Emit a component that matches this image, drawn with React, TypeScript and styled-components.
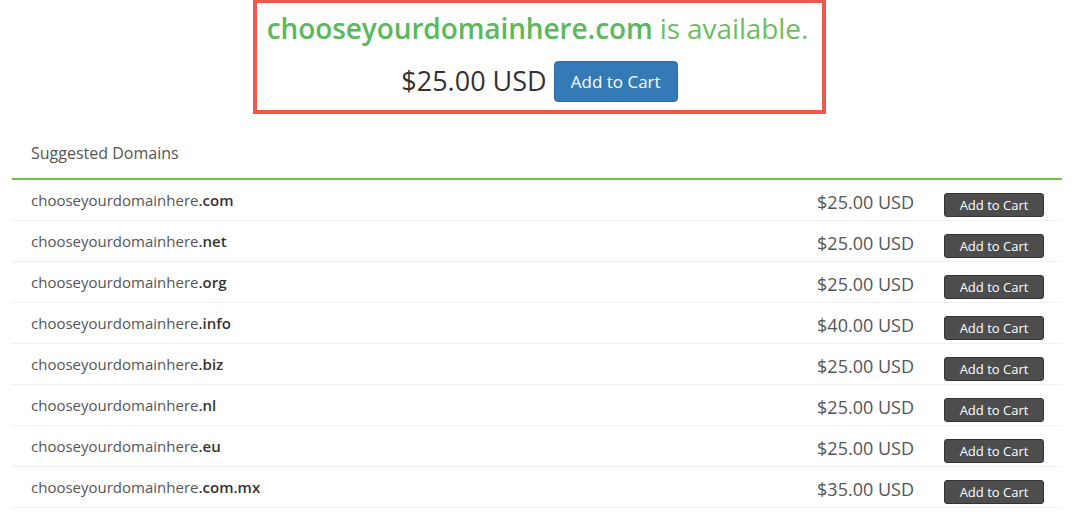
import styled, { createGlobalStyle } from 'styled-components';

const GlobalStyle = createGlobalStyle`
  html, body {
    margin: 0;
    padding: 0;
    background: #ffffff;
    font-family: 'Open Sans', 'Liberation Sans', sans-serif;
  }
`;

type Suggestion = {
  name: string;
  tld: string;
  price: string;
};

const suggestions: Suggestion[] = [
  { name: 'chooseyourdomainhere', tld: '.com', price: '$25.00 USD' },
  { name: 'chooseyourdomainhere', tld: '.net', price: '$25.00 USD' },
  { name: 'chooseyourdomainhere', tld: '.org', price: '$25.00 USD' },
  { name: 'chooseyourdomainhere', tld: '.info', price: '$40.00 USD' },
  { name: 'chooseyourdomainhere', tld: '.biz', price: '$25.00 USD' },
  { name: 'chooseyourdomainhere', tld: '.nl', price: '$25.00 USD' },
  { name: 'chooseyourdomainhere', tld: '.eu', price: '$25.00 USD' },
  { name: 'chooseyourdomainhere', tld: '.com.mx', price: '$35.00 USD' },
];

const Page = styled.div`
  width: 1080px;
  padding: 0 18px 0 12px;
  box-sizing: border-box;
`;

const Highlight = styled.div`
  width: 573px;
  height: 114px;
  margin-left: 241px;
  border: 4px solid #f2574b;
  border-top-width: 3px;
  box-sizing: border-box;
  display: flex;
  flex-direction: column;
  align-items: center;
  padding-top: 8px;
`;

const Headline = styled.div`
  font-size: 28px;
  line-height: 34px;
  color: #6dbd5f;
  letter-spacing: -0.1px;
  margin-left: -4px;
`;

const DomainStrong = styled.span`
  font-weight: 600;
  color: #5cb85c;
`;

const PriceRow = styled.div`
  display: flex;
  align-items: center;
  gap: 7px;
  margin-top: 16px;
`;

const BigPrice = styled.span`
  font-size: 27px;
  color: #333333;
  margin-top: -2px;
`;

const PrimaryButton = styled.button`
  height: 41px;
  width: 124px;
  border: 1px solid #2e6da4;
  border-radius: 4px;
  background: #337ab7;
  color: #ffffff;
  font-family: inherit;
  font-size: 17px;
  padding: 0;
  cursor: pointer;
`;

const PanelHeader = styled.div`
  height: 66px;
  padding: 28px 0 0 19px;
  font-size: 16px;
  line-height: 22px;
  color: #555555;
  border-bottom: 2px solid #6cc644;
  box-sizing: border-box;
`;

const Row = styled.div`
  height: 41px;
  display: flex;
  align-items: center;
  padding: 0 18px 0 19px;
  border-bottom: 1px solid #f0f0f0;
  box-sizing: border-box;
`;

const DomainName = styled.span`
  flex: 1;
  font-size: 15px;
  color: #555555;
  margin-top: -1px;
`;

const Tld = styled.span`
  font-weight: 600;
  color: #333333;
`;

const RowPrice = styled.span`
  font-size: 18px;
  color: #555555;
  margin: 4px 30px 0 0;
`;

const SmallButton = styled.button`
  width: 100px;
  height: 24px;
  border: 1px solid #333333;
  border-radius: 3px;
  background: #4d4d4d;
  color: #ffffff;
  font-family: inherit;
  font-size: 13px;
  padding: 0;
  margin-top: 10px;
  cursor: pointer;
`;

export default function App() {
  return (
    <>
      <GlobalStyle />
      <Page>
        <Highlight>
          <Headline>
            <DomainStrong>chooseyourdomainhere.com</DomainStrong> is available.
          </Headline>
          <PriceRow>
            <BigPrice>$25.00 USD</BigPrice>
            <PrimaryButton>Add to Cart</PrimaryButton>
          </PriceRow>
        </Highlight>
        <PanelHeader>Suggested Domains</PanelHeader>
        {suggestions.map((s) => (
          <Row key={s.tld}>
            <DomainName>
              {s.name}
              <Tld>{s.tld}</Tld>
            </DomainName>
            <RowPrice>{s.price}</RowPrice>
            <SmallButton>Add to Cart</SmallButton>
          </Row>
        ))}
      </Page>
    </>
  );
}
